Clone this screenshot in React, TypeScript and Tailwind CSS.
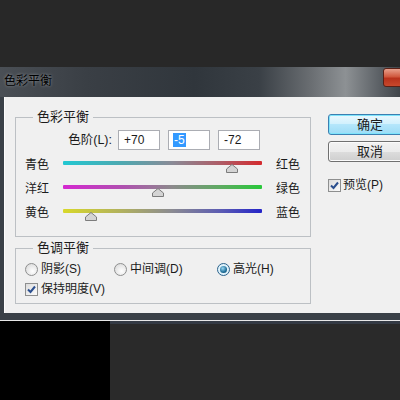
const font = "font-['Liberation_Sans','Noto_Sans_CJK_SC',sans-serif]"

function CheckBox() {
  return (
    <span className="flex h-[13px] w-[13px] shrink-0 items-center justify-center border border-[#8e8f8f] bg-[linear-gradient(135deg,#dcdcdc,#fbfbfb)]">
      <svg width="11" height="11" viewBox="0 0 11 11">
        <path d="M2 5.5 L4.5 8 L9 2.5" fill="none" stroke="#2b4f8f" strokeWidth="2" />
      </svg>
    </span>
  )
}

function Radio({ on }: { on?: boolean }) {
  return (
    <span
      className={
        on
          ? 'flex h-[13px] w-[13px] shrink-0 items-center justify-center rounded-full border border-[#2c628b] bg-[#dff2fb]'
          : 'flex h-[13px] w-[13px] shrink-0 items-center justify-center rounded-full border border-[#8e8f8f] bg-[radial-gradient(circle_at_60%_65%,#ffffff,#d4d4d4)]'
      }>
      {on && (
        <span className="h-[7px] w-[7px] rounded-full bg-[radial-gradient(circle_at_40%_35%,#9ad8f4,#1f6e98_60%,#0d3f5c)]" />
      )}
    </span>
  )
}

function Slider({
  left,
  right,
  track,
  pos,
}: {
  left: string
  right: string
  track: string
  pos: number
}) {
  return (
    <div className="flex h-[24px] items-center">
      <span className="w-[47px] shrink-0 pl-[9px] leading-[14px]">{left}</span>
      <div className="relative h-[8px] w-[199px] shrink-0">
        <div className={`h-[4px] w-full rounded-[1px] ${track}`} />
        <svg
          className="absolute top-[3px] -ml-[6px]"
          style={{ left: `${pos}%` }}
          width="12"
          height="9"
          viewBox="0 0 12 9">
          <path d="M6 0.5 L11.5 5 L11.5 8.5 L0.5 8.5 L0.5 5 Z" fill="#d4d4d4" stroke="#7c7c7c" />
        </svg>
      </div>
      <span className="ml-[14px] leading-[14px]">{right}</span>
    </div>
  )
}

export default function App() {
  return (
    <div className={`flex h-[400px] w-[400px] flex-col overflow-hidden bg-[#282828] text-[12px] text-[#1b1b1b] ${font}`}>
      <div className="h-[67px] shrink-0" />

      {/* window */}
      <div className="w-[432px] shrink-0">
        <div className="flex h-[30px] items-start bg-[linear-gradient(90deg,#4a4f55_0%,#3a3f45_20%,#30363c_45%,#3a4046_60%,#6a6e72_72%,#8d9194_80%,#5a5f64_88%,#32373c_95%)] pt-[1px]">
          <span className="ml-[4px] mt-[6px] leading-[14px] text-black [text-shadow:0_0_3px_#9ca2a8]">
            色彩平衡
          </span>
          <div className="ml-auto mr-[4px] h-[19px] w-[45px] rounded-[3px] border border-[#5a2016] bg-[linear-gradient(180deg,#e8a08c_0%,#d0583e_45%,#b8321c_55%,#c8482c_100%)]" />
        </div>

        <div className="bg-[#3a4047] pl-[4px] pb-[7px]">
          <div className="flex h-[216px] border-l border-[#fcfcfc] bg-[#f0f0f0]">
            {/* left column */}
            <div className="pl-[10px] pt-[13px]">
              <fieldset className="w-[296px] border border-[#bcc0c4] px-0 pb-[11px] pt-[6px]">
                <legend className="ml-[17px] px-[4px] text-[13px] leading-[14px]">色彩平衡</legend>
                <div className="flex h-[20px] items-center">
                  <span className="w-[96px] shrink-0 text-right text-[12.5px] leading-[14px]">色阶(L):</span>
                  <div className="ml-[6px] flex gap-[8px]">
                    <div className="flex h-[20px] w-[42px] items-center border border-[#abadb3] bg-white pl-[5px]">+70</div>
                    <div className="flex h-[20px] w-[42px] items-center border border-[#abadb3] bg-white pl-[4px]">
                      <span className="bg-[#3399ff] px-[1px] leading-[14px] text-white">-5</span>
                    </div>
                    <div className="flex h-[20px] w-[42px] items-center border border-[#abadb3] bg-white pl-[5px]">-72</div>
                  </div>
                </div>
                <div className="mt-[3px]">
                  <Slider
                    left="青色"
                    right="红色"
                    pos={85}
                    track="bg-[linear-gradient(90deg,#22c8d2_0%,#4fa8b0_30%,#8a8a96_55%,#b05a64_80%,#d42a2e_100%)]"
                  />
                  <Slider
                    left="洋红"
                    right="绿色"
                    pos={47.5}
                    track="bg-[linear-gradient(90deg,#d428d0_0%,#b050b0_30%,#8c8a8c_55%,#5cac60_80%,#28c83a_100%)]"
                  />
                  <Slider
                    left="黄色"
                    right="蓝色"
                    pos={14}
                    track="bg-[linear-gradient(90deg,#d8d82a_0%,#b0b060_30%,#8a8a92_55%,#5a5ab4_80%,#2424c8_100%)]"
                  />
                </div>
              </fieldset>

              <fieldset className="mt-[4px] w-[296px] border border-[#bcc0c4] px-0 pb-[4px] pt-[4px]">
                <legend className="ml-[17px] px-[4px] text-[13px] leading-[14px]">色调平衡</legend>
                <div className="flex h-[20px] items-center pl-[9px]">
                  <label className="flex w-[89px] items-center gap-[3px]">
                    <Radio />
                    <span className="leading-[14px]">阴影(S)</span>
                  </label>
                  <label className="flex w-[103px] items-center gap-[3px]">
                    <Radio />
                    <span className="leading-[14px]">中间调(D)</span>
                  </label>
                  <label className="flex items-center gap-[3px]">
                    <Radio on />
                    <span className="leading-[14px]">高光(H)</span>
                  </label>
                </div>
                <div className="flex h-[20px] items-center gap-[3px] pl-[9px]">
                  <CheckBox />
                  <span className="leading-[14px]">保持明度(V)</span>
                </div>
              </fieldset>
            </div>

            {/* right column */}
            <div className="ml-[17px] flex flex-col pt-[17px]">
              <button
                type="button"
                className="h-[21px] w-[84px] rounded-[3px] border border-[#3c7fb1] bg-[linear-gradient(180deg,#eaf8fe_0%,#d2f1fd_45%,#b4e6fb_50%,#9cdcf6_100%)] text-[13px] leading-[14px] shadow-[inset_0_0_0_1px_#7ee4fb]">
                确定
              </button>
              <button
                type="button"
                className="mt-[6px] h-[21px] w-[84px] rounded-[3px] border border-[#707070] bg-[linear-gradient(180deg,#f2f2f2_0%,#ebebeb_50%,#dddddd_50%,#cfcfcf_100%)] text-[13px] leading-[14px] shadow-[inset_0_0_0_1px_#fbfbfb]">
                取消
              </button>
              <div className="mt-[13px] flex h-[20px] items-center gap-[2px]">
                <CheckBox />
                <span className="leading-[14px]">预览(P)</span>
              </div>
            </div>
          </div>
        </div>
        <div className="h-[1px] bg-[#e8e8e8]" />
      </div>

      {/* below window */}
      <div className="flex flex-1">
        <div className="w-[110px] bg-black" />
        <div className="flex flex-1 flex-col bg-[#2a2a2a]">
          <div className="h-[3px] bg-[#343a44]" />
        </div>
      </div>
    </div>
  )
}
